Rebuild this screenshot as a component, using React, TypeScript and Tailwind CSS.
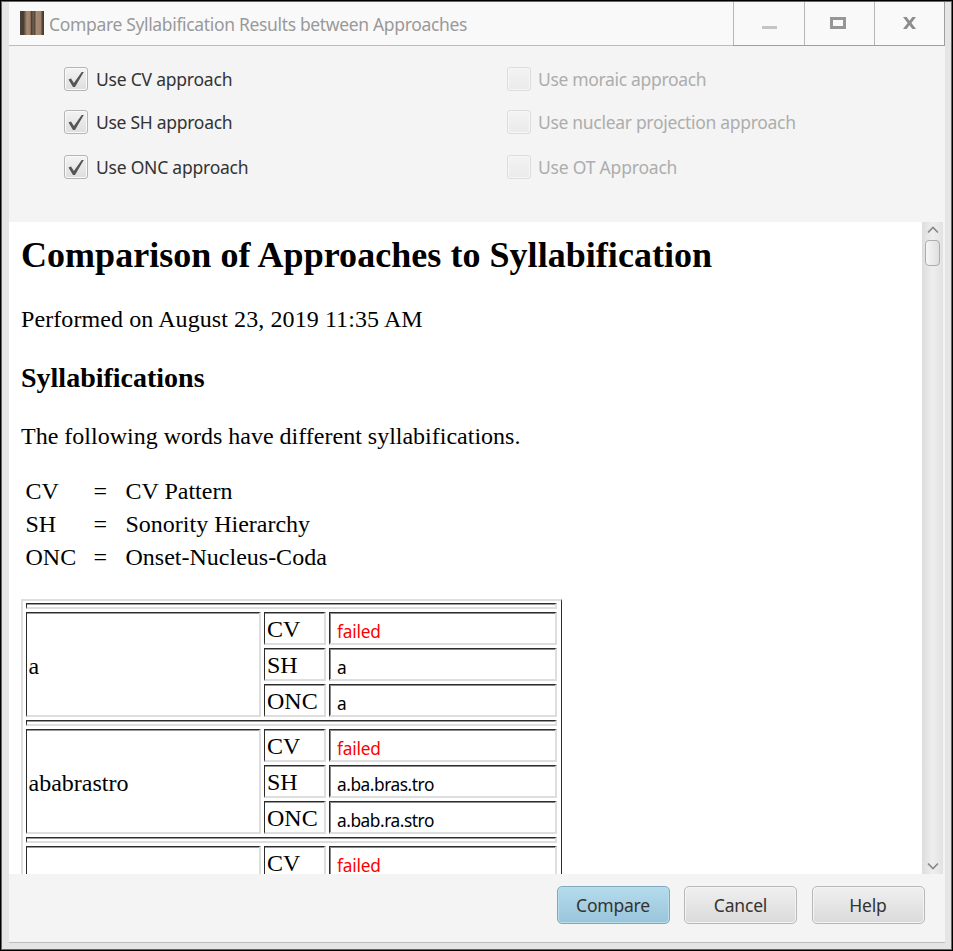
import React from "react";

const SERIF = "font-['Liberation_Serif',serif]";
const SANS = "font-['Noto_Sans',sans-serif]";

function CheckBox({ label, checked, wide }: { label: string; checked?: boolean; wide: string }) {
  return (
    <div className={`flex h-6 items-center ${checked ? "text-[#333]" : "text-[#adadad]"}`}>
      <span
        className={`flex size-6 shrink-0 items-center justify-center rounded-[3px] border bg-linear-to-b ${
          checked ? "border-[#b5b5b5] from-[#f3f3f3] to-[#dedede] shadow-[inset_0_0_0_1px_#fafafa]" : "border-[#dcdcdc] from-[#f3f3f3] to-[#eaeaea] shadow-[inset_0_0_0_1px_#f7f7f7]"
        }`}
      >
        {checked && (
          <svg width="16" height="17" viewBox="0 0 16 17">
            <path d="M0.5 8.5 L3 7.4 L5.9 12 L13.7 1 L15.8 1 L7 16 L5 16 Z" fill="#555" />
          </svg>
        )}
      </span>
      <span className={`whitespace-nowrap text-[17.5px] leading-6 ${checked ? "ml-2" : "ml-[7px]"} ${wide}`}>{label}</span>
    </div>
  );
}

const cell =
  "border-t border-l border-r-2 border-b-2 border-t-[#2c2c2c] border-l-[#2c2c2c] border-r-[#dedede] border-b-[#dedede]";
const bevel = "shadow-[inset_0_1px_0_#9a9a9a]";
const deepBevel = "shadow-[inset_1px_1px_0_#8a8a8a]";

function WordRows({ word, results }: { word: string; results: string[] }) {
  const names = ["CV", "SH", "ONC"];
  return (
    <>
      <div className={`col-span-3 ${cell} ${bevel}`} />
      <div className={`row-span-3 flex items-center pt-[4px] pl-[1.5px] ${cell} ${bevel}`}>{word}</div>
      {results.map((result, i) => (
        <React.Fragment key={names[i]}>
          <div className={`flex items-center pt-[2px] pl-[2px] leading-[28px] ${cell} ${bevel}`}>{names[i]}</div>
          <div
            className={`flex items-center pt-[7px] pl-[7px] text-[17.3px] leading-[18px] ${SANS} ${cell} ${deepBevel} ${
              result === "failed" ? "tracking-[-0.2px] text-[#ff0000]" : "tracking-[-0.45px]"
            }`}
          >
            {result}
          </div>
        </React.Fragment>
      ))}
    </>
  );
}

function Button({ label, primary }: { label: string; primary?: boolean }) {
  return (
    <button
      className={`h-[38px] w-[113px] rounded-[5px] border bg-linear-to-b pt-px text-[17.5px] tracking-[-0.2px] text-[#333] ${
        primary
          ? "border-[#7fa9bc] from-[#b5dcec] to-[#9ac4da] shadow-[inset_0_0_0_1px_#b9ddeb]"
          : "border-[#b8b8b8] from-[#f0f0f0] to-[#dadada] shadow-[inset_0_0_0_1px_#f4f4f4]"
      }`}
    >
      {label}
    </button>
  );
}

function TitleBar() {
  return (
    <div className="flex h-[44px] border-b border-[#bcbcc2] bg-[#f9f9f9]">
      <svg className="mt-[9px] ml-[11px] shrink-0" width="24" height="24" viewBox="0 0 24 24">
        <defs>
          <linearGradient id="wood">
            <stop offset="0" stopColor="#46413a" />
            <stop offset=".14" stopColor="#463c32" />
            <stop offset=".22" stopColor="#7d6654" />
            <stop offset=".29" stopColor="#a88a72" />
            <stop offset=".42" stopColor="#9e8069" />
            <stop offset=".48" stopColor="#4b4036" />
            <stop offset=".55" stopColor="#75614f" />
            <stop offset=".61" stopColor="#54483c" />
            <stop offset=".68" stopColor="#a88a72" />
            <stop offset=".86" stopColor="#9e8069" />
            <stop offset=".93" stopColor="#514537" />
            <stop offset="1" stopColor="#3c3934" />
          </linearGradient>
        </defs>
        <rect width="24" height="24" fill="url(#wood)" />
      </svg>
      <div className="ml-[5px] flex-1 whitespace-nowrap pt-px text-[17.5px] leading-[42px] tracking-[-0.34px] text-[#999]">
        Compare Syllabification Results between Approaches
      </div>
      <div className="flex h-[44px] w-[212px] shrink-0 border-r border-b border-[#9e9ea3]">
        <div className="w-[71px] border-l border-[#b6b6bb]">
          <div className="mt-[24px] ml-[28px] h-[3px] w-[15px] bg-[#c5c5c5]" />
        </div>
        <div className="w-[70px] border-l border-[#b6b6bb]">
          <div className="mt-[15px] ml-[25px] h-3 w-4 border-3 border-[#969696]" />
        </div>
        <div className="flex-1 border-l border-[#b6b6bb]">
          <svg className="mt-[15px] ml-[28px]" width="13" height="12" viewBox="0 0 13 12">
            <path d="M0 0H3.6L6.5 3.8L9.4 0H13L8.4 6L13 12H9.4L6.5 8.2L3.6 12H0L4.6 6Z" fill="#8d8d8d" />
          </svg>
        </div>
      </div>
    </div>
  );
}

export default function App() {
  return (
    <div className={`h-[951px] w-[953px] overflow-hidden border border-black ${SANS}`}>
      <div className="h-full border border-[#666] bg-[#e5e5e5] pr-[6px] pl-[7px]">
        <div className="flex h-[941px] flex-col border-b border-[#bebebe] bg-[#f4f4f4]">
          <TitleBar />
          <div className="grid h-[176px] grid-cols-[443px_1fr] grid-rows-[43px_45px_24px] content-start pt-[21px] pl-[55px]">
            <CheckBox checked label="Use CV approach" wide="tracking-[-0.22px]" />
            <CheckBox label="Use moraic approach" wide="tracking-[-0.33px]" />
            <CheckBox checked label="Use SH approach" wide="tracking-[-0.28px]" />
            <CheckBox label="Use nuclear projection approach" wide="tracking-[-0.31px]" />
            <CheckBox checked label="Use ONC approach" wide="tracking-[-0.23px]" />
            <CheckBox label="Use OT Approach" wide="tracking-[-0.2px]" />
          </div>
          <div className="flex h-[652px] overflow-hidden">
            <div className={`w-[913px] overflow-hidden bg-white pl-3 text-[24px] leading-[33px] text-black ${SERIF}`}>
              <h1 className="mt-[13px] whitespace-nowrap text-[36px] leading-[40px] font-bold tracking-[0.04px]">Comparison of Approaches to Syllabification</h1>
              <p className="mt-[28px] whitespace-nowrap tracking-[0.09px]">Performed on August 23, 2019 11:35 AM</p>
              <h2 className="mt-[25px] text-[28px] leading-[33px] font-bold">Syllabifications</h2>
              <p className="mt-[26px] whitespace-nowrap">The following words have different syllabifications.</p>
              <div className="mt-[22px] ml-[4.5px] grid grid-cols-[68px_32px_1fr]">
                <span>CV</span><span>=</span><span>CV Pattern</span>
                <span>SH</span><span>=</span><span>Sonority Hierarchy</span>
                <span>ONC</span><span>=</span><span>Onset-Nucleus-Coda</span>
              </div>
              <div className="mt-[25px] grid h-[400px] w-[541px] grid-cols-[235px_62px_228px] grid-rows-[6px_33px_33px_33px_6px_33px_33px_33px_6px_33px_33px_33px] gap-[3px] border-t-2 border-r border-l-2 border-t-[#dedede] border-r-[#2c2c2c] border-l-[#dedede] pt-[2px] pl-[3px]">
                <WordRows word="a" results={["failed", "a", "a"]} />
                <WordRows word="ababrastro" results={["failed", "a.ba.bras.tro", "a.bab.ra.stro"]} />
                <WordRows word="" results={["failed"]} />
              </div>
            </div>
            <div className="flex w-[21px] flex-col items-center bg-linear-to-r from-[#dddddd] via-[#eeeeee] to-[#e2e2e2]">
              <svg className="mt-[4px]" width="12" height="8" viewBox="0 0 12 8"><path d="M1 6.5L6 1.5L11 6.5" fill="none" stroke="#888" strokeWidth="1.7" /></svg>
              <div className="mt-[6px] h-[26px] w-[15px] rounded-[4px] border border-[#acacac] bg-linear-to-r from-[#f6f6f6] to-[#dedede]" />
              <svg className="mt-auto mb-[4px]" width="12" height="8" viewBox="0 0 12 8"><path d="M1 1.5L6 6.5L11 1.5" fill="none" stroke="#888" strokeWidth="1.7" /></svg>
            </div>
          </div>
          <div className="flex justify-end gap-[14.5px] pt-[12px] pr-[20.5px]">
            <Button primary label="Compare" />
            <Button label="Cancel" />
            <Button label="Help" />
          </div>
        </div>
      </div>
    </div>
  );
}
